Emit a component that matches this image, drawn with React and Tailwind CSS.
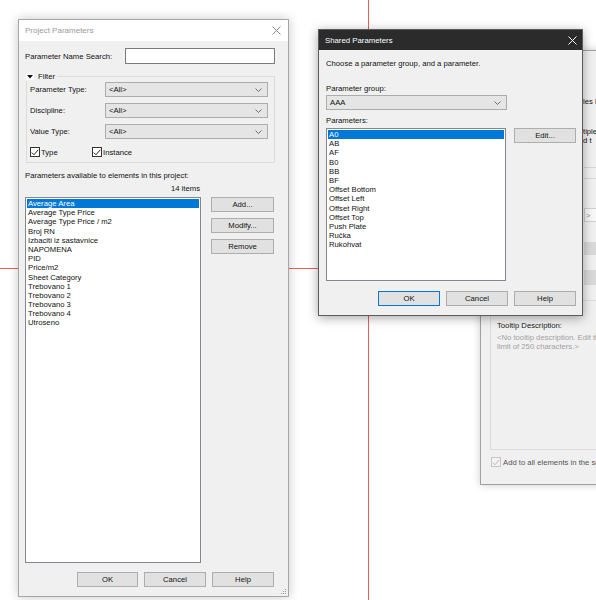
import React from "react";

function XIcon({ color }) {
  return (
    <svg width="9" height="9" viewBox="0 0 9 9">
      <path d="M0.5 0.5 L8.5 8.5 M8.5 0.5 L0.5 8.5" stroke={color} strokeWidth="1" fill="none" />
    </svg>
  );
}

function Chevron() {
  return (
    <svg width="7" height="4" viewBox="0 0 7 4">
      <path d="M0.5 0.5 L3.5 3.5 L6.5 0.5" fill="none" stroke="#606060" strokeWidth="0.9" />
    </svg>
  );
}

function Select({ value, className }) {
  return (
    <div className={"flex items-center justify-between h-[15px] bg-[#e5e5e5] border border-[#acacac] pl-[3px] pr-[5px] " + className}>
      <span>{value}</span>
      <Chevron />
    </div>
  );
}

function Button({ children, className }) {
  return (
    <div className={"flex items-center justify-center h-[15px] bg-[#e1e1e1] border border-[#adadad] " + className}>
      {children}
    </div>
  );
}

function Check({ disabled }) {
  return (
    <span
      className={
        disabled
          ? "w-[10px] h-[10px] border border-[#c6c6c6] bg-[#f3f3f3] flex items-center justify-center shrink-0"
          : "w-[10px] h-[10px] border border-[#333333] bg-white flex items-center justify-center shrink-0"
      }
    >
      <svg width="8" height="7" viewBox="0 0 8 7">
        <path d="M0.8 3.6 L3 5.8 L7.2 0.8" fill="none" stroke={disabled ? "#b8b8b8" : "#222"} strokeWidth="1" />
      </svg>
    </span>
  );
}

const projectItems = [
  "Average Area",
  "Average Type Price",
  "Average Type Price / m2",
  "Broj RN",
  "Izbaciti iz sastavnice",
  "NAPOMENA",
  "PID",
  "Price/m2",
  "Sheet Category",
  "Trebovano 1",
  "Trebovano 2",
  "Trebovano 3",
  "Trebovano 4",
  "Utroseno",
];

const sharedItems = [
  "A0",
  "AB",
  "AF",
  "B0",
  "BB",
  "BF",
  "Offset Bottom",
  "Offset Left",
  "Offset Right",
  "Offset Top",
  "Push Plate",
  "Ručka",
  "Rukohvat",
];

function ListBox({ items, className }) {
  return (
    <div className={"bg-white border border-[#828790] p-[1px] flex flex-col " + className}>
      {items.map((it, i) => (
        <div
          key={it}
          className={
            i === 0
              ? "h-[9.2px] leading-[9.2px] bg-[#0078d7] text-white pl-[1px] whitespace-nowrap"
              : "h-[9.2px] leading-[9.2px] pl-[1px] whitespace-nowrap"
          }
        >
          {it}
        </div>
      ))}
    </div>
  );
}

function ProjectDialog() {
  return (
    <div className="absolute left-[18px] top-[19px] w-[271px] border border-[#a6a6a6] bg-[#f0f0f0] shadow-[0_0_10px_rgba(0,0,0,0.22)] flex flex-col">
      <div className="h-[21px] bg-white flex items-center justify-between pl-[6px] pr-[7px]">
        <span className="text-[#9a9a9a] text-[8px]">Project Parameters</span>
        <XIcon color="#8a8a8a" />
      </div>
      <div className="flex flex-col pl-[6px] pr-[13px] pb-[9px]">
        <div className="mt-[7px] flex items-center h-[16px]">
          <span>Parameter Name Search:</span>
          <div className="ml-auto w-[150px] h-[16px] bg-white border border-[#7a7a7a]" />
        </div>

        <div className="relative mt-[12px] ml-[1px] border border-[#dcdcdc] pt-[5px] pl-[3px] pr-[6px] pb-[5px] flex flex-col gap-[6px]">
          <div className="absolute -top-[5px] -left-[1px] flex items-center gap-[4px] pr-[2px] bg-[#f0f0f0] h-[9px]">
            <span className="w-[8px] h-[6px] bg-white flex items-center justify-center">
              <svg width="6" height="4" viewBox="0 0 6 4">
                <path d="M0 0 L6 0 L3 3.5 Z" fill="#111" />
              </svg>
            </span>
            <span>Filter</span>
          </div>
          <div className="flex items-center">
            <span className="w-[75px]">Parameter Type:</span>
            <Select value="<All>" className="flex-1" />
          </div>
          <div className="flex items-center">
            <span className="w-[75px]">Discipline:</span>
            <Select value="<All>" className="flex-1" />
          </div>
          <div className="flex items-center">
            <span className="w-[75px]">Value Type:</span>
            <Select value="<All>" className="flex-1" />
          </div>
          <div className="mt-[2px] flex items-center h-[10px]">
            <div className="w-[62px] flex items-center gap-[1px]">
              <Check />
              <span>Type</span>
            </div>
            <div className="flex items-center gap-[1px]">
              <Check />
              <span>Instance</span>
            </div>
          </div>
        </div>

        <div className="mt-[8px] h-[9px]">Parameters available to elements in this project:</div>
        <div className="mt-[4px] h-[9px] w-[176px] text-right pr-[1px]">14 items</div>

        <div className="mt-[4px] flex">
          <ListBox items={projectItems} className="w-[176px] h-[366px]" />
          <div className="ml-[10px] w-[63px] flex flex-col gap-[6px]">
            <Button>Add...</Button>
            <Button>Modify...</Button>
            <Button>Remove</Button>
          </div>
        </div>

        <div className="mt-[9px] flex justify-end gap-[6px] pr-[1px]">
          <Button className="w-[61px]">OK</Button>
          <Button className="w-[62px]">Cancel</Button>
          <Button className="w-[62px]">Help</Button>
        </div>
      </div>
      <svg className="absolute right-[1px] bottom-[1px]" width="6" height="6" viewBox="0 0 6 6">
        <rect x="4" y="0" width="1" height="1" fill="#9a9a9a" />
        <rect x="2" y="2" width="1" height="1" fill="#9a9a9a" />
        <rect x="4" y="2" width="1" height="1" fill="#9a9a9a" />
        <rect x="0" y="4" width="1" height="1" fill="#9a9a9a" />
        <rect x="2" y="4" width="1" height="1" fill="#9a9a9a" />
        <rect x="4" y="4" width="1" height="1" fill="#9a9a9a" />
      </svg>
    </div>
  );
}

function SharedDialog() {
  return (
    <div className="absolute left-[318px] top-[29px] w-[265px] h-[287px] border border-[#5c5c5c] bg-[#f0f0f0] shadow-[0_2px_10px_rgba(0,0,0,0.35)] flex flex-col">
      <div className="h-[20px] bg-[#2b2b2b] flex items-center justify-between pl-[6px] pr-[5px]">
        <span className="text-white text-[7.8px]">Shared Parameters</span>
        <XIcon color="#ffffff" />
      </div>
      <div className="flex flex-col pl-[7px] pr-[6px]">
        <div className="mt-[9px] h-[9px]">Choose a parameter group, and a parameter.</div>
        <div className="mt-[16px] h-[9px]">Parameter group:</div>
        <Select value="AAA" className="mt-[2px] w-[181px]" />
        <div className="mt-[6px] h-[9px]">Parameters:</div>
        <div className="mt-[3px] flex items-start">
          <ListBox items={sharedItems} className="w-[180px] h-[153px]" />
          <Button className="ml-auto w-[62px]">Edit...</Button>
        </div>
        <div className="mt-[10px] flex justify-end gap-[6px]">
          <Button className="w-[62px] !border-[#0078d7]">OK</Button>
          <Button className="w-[62px]">Cancel</Button>
          <Button className="w-[62px]">Help</Button>
        </div>
      </div>
    </div>
  );
}

function BackgroundDialog() {
  return (
    <div className="absolute left-[480px] top-[50px] w-[140px] h-[435px] bg-[#f0f0f0] border border-[#a0a0a0] shadow-[0_0_8px_rgba(0,0,0,0.2)] flex flex-col">
      <div className="ml-[102px] mt-[46px] h-[9px] whitespace-nowrap">les l</div>
      <div className="ml-[102px] mt-[21px] h-[9px] whitespace-nowrap">tiple</div>
      <div className="ml-[102px] h-[9px] whitespace-nowrap">d t</div>
      <div className="ml-[103px] mt-[22px] border-t border-[#d6d6d6]" />
      <div className="ml-[103px] mt-[10px] border-t border-[#d6d6d6]" />
      <div className="ml-[103px] mt-[29px] h-[14px] border border-[#cfcfcf] bg-[#f7f7f7] text-[#8a8a8a] pl-[1px] flex items-center">&gt;</div>
      <div className="ml-[103px] mt-[20px] h-[13px] bg-[#d9d9d9]" />
      <div className="ml-[103px] mt-[15px] h-[15px] bg-[#d9d9d9]" />
      <div className="ml-[9px] mt-[15px] h-[150px] border border-[#dcdcdc] pt-[20px] pl-[6px] flex flex-col overflow-hidden">
        <div className="h-[9px] whitespace-nowrap text-[#1a1a1a]">Tooltip Description:</div>
        <div className="mt-[3px] h-[9px] whitespace-nowrap text-[#a2a2a2]">&lt;No tooltip description. Edit this parameter to write a custom tooltip. Custom tooltips have a</div>
        <div className="h-[9px] whitespace-nowrap text-[#a2a2a2]">limit of 250 characters.&gt;</div>
      </div>
      <div className="ml-[10px] mt-[7px] flex items-center gap-[2px] h-[10px]">
        <Check disabled />
        <span className="whitespace-nowrap text-[#555555]">Add to all elements in the selected categories</span>
      </div>
    </div>
  );
}

export default function App() {
  return (
    <div className="relative w-[596px] h-[600px] overflow-hidden bg-white font-[family-name:Liberation_Sans,Arial,sans-serif] text-[7.7px] leading-[9px] text-[#111111]">
      <div className="absolute left-[368px] top-0 w-px h-full bg-[#f25c5c]" />
      <div className="absolute top-[268px] left-0 h-px w-full bg-[#f25c5c]" />
      <BackgroundDialog />
      <ProjectDialog />
      <SharedDialog />
    </div>
  );
}
